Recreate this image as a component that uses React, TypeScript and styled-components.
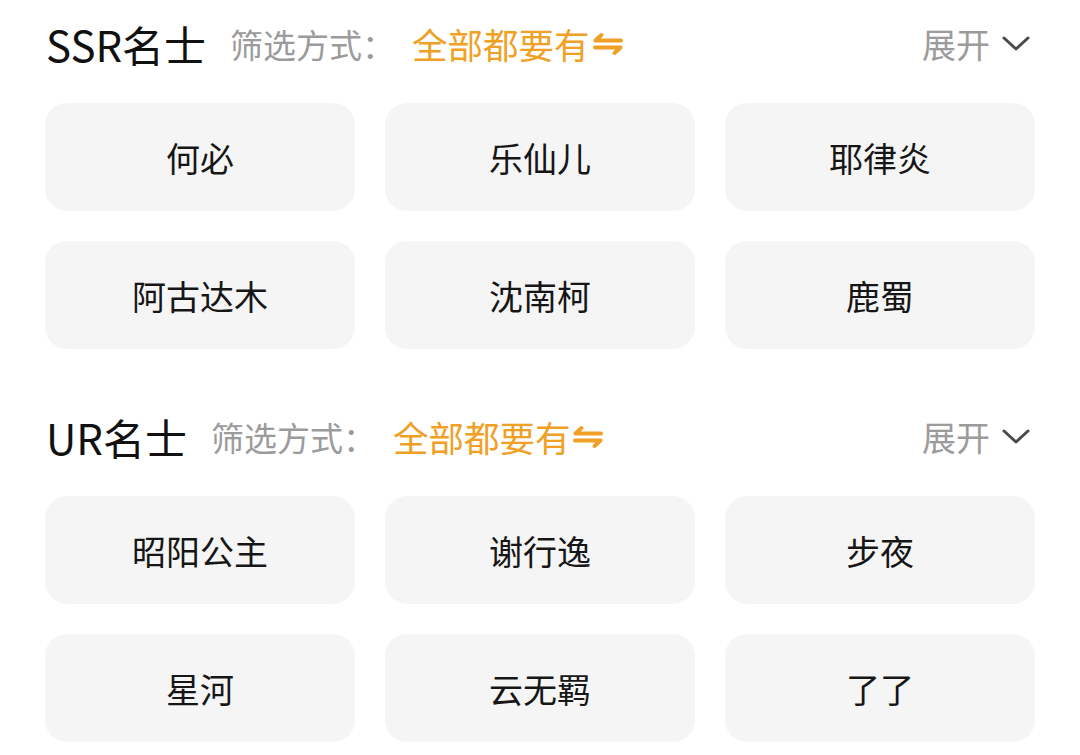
import React from "react";
import styled, { createGlobalStyle } from "styled-components";

const GlobalStyle = createGlobalStyle`
  html, body {
    margin: 0;
    padding: 0;
    background: #ffffff;
  }
  body {
    font-family: "Noto Sans CJK SC", "Noto Sans", sans-serif;
    color: #141414;
  }
`;

const orange = "#f0a024";
const grey = "#9b9b9b";

const Page = styled.div`
  display: flex;
  flex-direction: column;
  gap: 60px;
  padding: 16px 45px 0;
`;

const Section = styled.section`
  display: flex;
  flex-direction: column;
  gap: 31px;
`;

const Header = styled.div`
  display: flex;
  align-items: center;
  height: 56px;
  padding: 0 5px 0 1px;
`;

const Title = styled.h2`
  margin: 0 24px 0 0;
  font-size: 42px;
  font-weight: 400;
  line-height: 1;
  color: #111111;
`;

const FilterLabel = styled.span`
  font-size: 33px;
  line-height: 1;
  color: ${grey};
  margin-right: 17px;
`;

const FilterValue = styled.button`
  display: flex;
  align-items: center;
  gap: 2px;
  padding: 0;
  border: none;
  background: none;
  font-family: inherit;
  font-size: 35.5px;
  line-height: 1;
  color: ${orange};
  cursor: pointer;
`;

const Expand = styled.button`
  margin-left: auto;
  display: flex;
  align-items: center;
  gap: 12px;
  padding: 0;
  border: none;
  background: none;
  font-family: inherit;
  font-size: 34px;
  line-height: 1;
  color: ${grey};
  cursor: pointer;
`;

const Grid = styled.div`
  display: grid;
  grid-template-columns: repeat(3, 1fr);
  grid-auto-rows: 108px;
  gap: 30px;
`;

const Card = styled.div`
  display: flex;
  align-items: center;
  justify-content: center;
  border-radius: 22px;
  background: #f5f5f5;
  font-size: 34px;
  color: #161616;
`;

const SwapIcon = () => (
  <svg width="32" height="24" viewBox="0 0 32 24" fill="none">
    <path
      d="M29 8.5H3.5L9.5 3"
      stroke={orange}
      strokeWidth="4"
      strokeLinecap="round"
      strokeLinejoin="round"
    />
    <path
      d="M3 15.5H28.5L22.5 21"
      stroke={orange}
      strokeWidth="4"
      strokeLinecap="round"
      strokeLinejoin="round"
    />
  </svg>
);

const Chevron = () => (
  <svg width="28" height="18" viewBox="0 0 28 18" fill="none">
    <path
      d="M2 3L14 14L26 3"
      stroke="#4a4a4a"
      strokeWidth="3"
      strokeLinecap="round"
      strokeLinejoin="round"
    />
  </svg>
);

type Group = { title: string; names: string[] };

const groups: Group[] = [
  { title: "SSR名士", names: ["何必", "乐仙儿", "耶律炎", "阿古达木", "沈南柯", "鹿蜀"] },
  { title: "UR名士", names: ["昭阳公主", "谢行逸", "步夜", "星河", "云无羁", "了了"] },
];

const GroupView = ({ group }: { group: Group }) => (
  <Section>
    <Header>
      <Title>{group.title}</Title>
      <FilterLabel>筛选方式：</FilterLabel>
      <FilterValue>
        全部都要有
        <SwapIcon />
      </FilterValue>
      <Expand>
        展开
        <Chevron />
      </Expand>
    </Header>
    <Grid>
      {group.names.map((n) => (
        <Card key={n}>{n}</Card>
      ))}
    </Grid>
  </Section>
);

export default function App() {
  return (
    <>
      <GlobalStyle />
      <Page>
        {groups.map((g) => (
          <GroupView key={g.title} group={g} />
        ))}
      </Page>
    </>
  );
}
